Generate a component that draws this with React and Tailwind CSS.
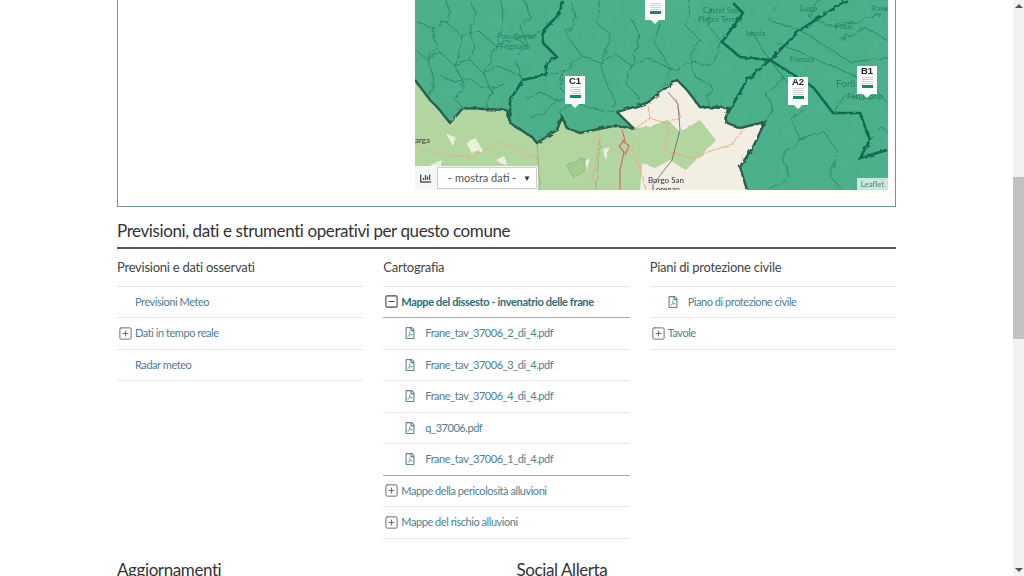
import { SquarePlus, SquareMinus } from 'lucide-react';
import { FaRegFilePdf, FaChartBar } from 'react-icons/fa';

const font = { fontFamily: 'Lato, sans-serif' };

// thin municipal borders, page coordinates
const thinLines = [
  'M415 20 L432 28 L446 22 L462 36 L478 30 L496 46 L515 38 L540 33',
  'M415 50 L428 60 L440 52 L455 66 L470 60 L484 74 L500 66 L520 76 L523 80',
  'M432 28 L436 48 L428 60 L434 80 L430 100',
  'M462 36 L458 58 L455 66 L464 84 L456 100 L463 108',
  'M496 46 L490 62 L484 74 L492 92 L486 110',
  'M446 0 L450 12 L446 22',
  'M500 0 L505 18 L496 46',
  'M520 76 L516 60 L528 46 L515 38',
  'M440 75 L455 82 L470 78 L484 90 L505 84',
  'M470 0 L476 14 L470 30 L474 48 L470 60',
  'M524 0 L530 16 L520 26 L528 46',
  'M545 75 L565 70 L582 56 L600 62 L615 54 L632 66 L650 58 L672 70 L690 60 L712 66 L722 42',
  'M565 70 L560 88 L572 100 L560 114 L562 117',
  'M600 62 L606 82 L614 98 L612 112 L617 112',
  'M632 66 L626 84 L638 96 L636 112',
  'M672 70 L664 84 L663 90',
  'M690 60 L696 78 L712 86 L706 106',
  'M570 0 L576 18 L566 34 L582 56',
  'M600 0 L596 22 L612 36 L600 62',
  'M632 20 L640 36 L632 66',
  'M660 24 L654 42 L672 70',
  'M690 0 L686 26 L700 40 L690 60',
  'M712 8 L708 26 L722 42',
  'M525 100 L540 92 L556 100 L572 100 L590 108 L612 112',
  'M530 118 L545 112 L556 100',
  'M770 60 L784 78 L766 92 L772 110 L765 122',
  'M784 78 L806 104 L792 120 L800 140 L782 156 L790 178 L770 190',
  'M800 140 L824 132 L838 152 L830 176 L842 190',
  'M750 30 L770 60 M780 0 L768 20 L800 30',
  'M776 42 L860 78 M800 30 L850 62 L888 58',
  'M820 0 L808 16 L830 26 L860 22 L888 10',
  'M833 113 L846 94 L862 100 L878 92 L888 104',
  'M870 140 L882 128 L888 132',
  'M840 40 L866 28 L888 40',
];

const roads = [
  'M415 146 L430 152 L470 158 L498 142 L528 154 L540 160',
  'M633 130 L650 118 L648 106 M650 118 L668 124 L680 116 L676 98',
  'M636 135 L632 150 L640 168 L646 190',
  'M668 124 L664 150 L690 158 L714 150 L732 144 L752 118',
  'M600 130 L596 160 L590 190',
];

const alertEdge =
  'M415 80 L430 100 L438 108 L450 123 L463 108 L507 110 L510 123 L532 137 L537 143 L557 130 L562 117 L567 128 L580 133 L613 126 L633 128 L617 112 L647 103 L663 90 L677 80 L687 90 L700 107 L728 108 L725 122 L740 128 L765 122 L753 147 L740 167 L747 190';

function MapDrawing() {
  return (
    <svg viewBox="415 0 473 190" className="block w-full h-full">
      <defs>
        <filter id="terrain" x="0" y="0" width="100%" height="100%">
          <feTurbulence type="fractalNoise" baseFrequency="0.06" numOctaves="3" seed="4" />
          <feColorMatrix values="0 0 0 0 0.1  0 0 0 0 0.5  0 0 0 0 0.35  0 0 0 1.1 -0.45" />
        </filter>
        <filter id="wiggle" x="-5%" y="-5%" width="110%" height="110%">
          <feTurbulence type="fractalNoise" baseFrequency="0.12" numOctaves="2" seed="7" />
          <feDisplacementMap in="SourceGraphic" scale="7" />
        </filter>
        <filter id="wiggleSmall" x="-5%" y="-5%" width="110%" height="110%">
          <feTurbulence type="fractalNoise" baseFrequency="0.2" numOctaves="2" seed="11" />
          <feDisplacementMap in="SourceGraphic" scale="3.5" />
        </filter>
        <clipPath id="alert">
          <path d={`${alertEdge} L888 190 L888 0 L415 0 Z`} />
        </clipPath>
      </defs>

      {/* base tiles */}
      <rect x="415" y="0" width="473" height="190" fill="#b3d5a0" />
      <path d="M617 112 L677 80 L700 107 L728 108 L740 128 L765 122 L745 170 L748 190 L640 190 L642 165 L636 128 Z" fill="#f3eee4" />
      <g filter="url(#wiggleSmall)">
        <path d="M636 128 L652 126 L668 120 L680 132 L700 120 L716 140 L702 154 L686 170 L670 160 L655 168 L640 162 Z" fill="#b3d5a0" />
        <path d="M466 142 L476 138 L482 150 L472 154 Z M580 165 L590 158 L586 172 Z M447 134 L456 138 L452 146 Z M495 160 L505 156 L508 166 Z M430 165 L442 160 L440 170 Z M602 150 L610 146 L606 160 Z" fill="#e9f0dc" />
        <path d="M566 165 L584 158 L586 170 L574 178 Z" fill="#a4cc8d" stroke="#7fae72" strokeWidth="0.6" />
        {roads.map((d) => (
          <path key={d} d={d} fill="none" stroke="#e8b27c" strokeWidth="1" />
        ))}
        <path d="M537 143 L540 190 M600 140 L596 190" fill="none" stroke="#8f9480" strokeWidth="0.6" />
      </g>
      <path d="M622 130 L625 140 L619 146 L624 152 L620 170 L620 190 M622 140 L629 146 L625 155" fill="none" stroke="#d4687a" strokeWidth="1.2" />
      <path d="M668 92 L678 104 L680 130 L672 160 L652 186" fill="none" stroke="#555" strokeWidth="0.7" />

      {/* alert zones */}
      <g clipPath="url(#alert)">
        <rect x="415" y="0" width="473" height="190" fill="#4bb08a" />
        <rect x="415" y="0" width="473" height="190" filter="url(#terrain)" opacity="0.4" />
        <g filter="url(#wiggle)">
          {thinLines.map((d) => (
            <path key={d} d={d} fill="none" stroke="#1f7358" strokeWidth="0.8" opacity="0.8" />
          ))}
        </g>
      </g>
      <g filter="url(#wiggleSmall)" fill="none">
        <path d={alertEdge} stroke="#2c5f4c" strokeWidth="2.4" />
        <path d="M562 0 L560 13 L542 32 L543 43 L557 57 L547 63 L545 75 L523 80 L510 100 L510 123" stroke="#126b50" strokeWidth="2.6" />
        <path d="M733 3 L743 13 L722 42 L740 57 L770 60 L747 80 L728 113" stroke="#126b50" strokeWidth="2.6" />
        <path d="M770 60 L800 30 L847 0 M770 60 L813 87 L833 113 L860 113 L870 140 L860 158 L887 150" stroke="#126b50" strokeWidth="2.6" />
      </g>

      {/* place names */}
      <g fontFamily="Lato, sans-serif" fontSize="8" fill="#1f7a5c" opacity="0.85">
        <text x="497" y="39">Pavullo nel</text>
        <text x="500" y="49">Frignano</text>
        <text x="703" y="13">Castel San</text>
        <text x="698" y="22">Pietro Terme</text>
        <text x="746" y="36">Imola</text>
        <text x="800" y="11">Lugo</text>
        <text x="835" y="29">Fussi</text>
        <text x="871" y="11">Rave</text>
        <text x="790" y="62">Faenza</text>
        <text x="836" y="87" fontSize="10">Forlì</text>
        <text x="847" y="99">Forlimpop</text>
      </g>
      <g fontFamily="Lato, sans-serif" fontSize="8" fill="#333">
        <text x="415" y="143">arga</text>
        <text x="648" y="183">Borgo San</text>
        <text x="652" y="192">Lorenzo</text>
      </g>
    </svg>
  );
}

function Marker({ label, left, top }) {
  return (
    <div className="absolute w-[20px] flex flex-col items-center" style={{ left, top }}>
      <div className="w-full h-[28px] bg-white flex flex-col items-center">
        <span className="text-[9.5px] leading-[10px] font-bold text-[#222] h-[10px]" style={{ fontFamily: '"Liberation Sans", sans-serif' }}>
          {label}
        </span>
        <div className="mt-[1px] w-[11px] flex flex-col gap-[1px]">
          <div className="h-[1px] bg-[#cfcfcf]" />
          <div className="h-[1px] bg-[#cfcfcf]" />
          <div className="h-[1px] bg-[#cfcfcf]" />
          <div className="h-[1px] bg-[#cfcfcf]" />
          <div className="h-[3px] bg-[#12896a]" />
        </div>
      </div>
      <div className="w-0 h-0 border-x-[4px] border-x-transparent border-t-[4px] border-t-white" />
    </div>
  );
}

function MapPanel() {
  return (
    <div className="h-[207px] border-x border-b border-[#6a96a3] flex justify-end pr-[7px]">
      <div className="relative w-[473px] h-[190px] overflow-hidden">
        <MapDrawing />
        <Marker label="" left={230} top={-8} />
        <Marker label="C1" left={150} top={76} />
        <Marker label="A2" left={373} top={77} />
        <Marker label="B1" left={442} top={66} />
        <div className="absolute left-0 bottom-0 w-[123px] h-[24px] bg-[#f6f6f6] flex items-center pl-[5px]">
          <FaChartBar className="shrink-0 w-[11px] h-[11px] text-[#555]" />
          <div className="ml-[6px] w-[100px] h-[22px] bg-white border border-[#ccc] flex items-center justify-between pl-[10px] pr-[5px] text-[11px] whitespace-nowrap text-[#555]" style={font}>
            <span>- mostra dati -</span>
            <span className="text-[8px] text-[#333]">▼</span>
          </div>
        </div>
        <div className="absolute right-0 bottom-0 w-[31px] h-[12px] bg-white/70 text-center text-[8px] leading-[13px] text-[#5b7f88]" style={font}>
          Leaflet
        </div>
      </div>
    </div>
  );
}

function Row({ icon, indent, bold, strong, children }) {
  return (
    <div className={`h-[31.5px] border-b flex items-center ${strong ? 'border-[#aaaaaa]' : 'border-[#e6e6e6]'}`}>
      {icon === 'plus' && <SquarePlus className="shrink-0 ml-[1px] w-[15px] h-[15px] text-[#666]" strokeWidth={1.5} />}
      {icon === 'minus' && <SquareMinus className="shrink-0 ml-[1px] w-[15px] h-[15px] text-[#444]" strokeWidth={1.7} />}
      {icon === 'pdf' && <FaRegFilePdf className={`${indent} shrink-0 w-[10px] h-[12px] text-[#5f8791]`} />}
      {!icon && <span className="w-[15px]" />}
      <span
        className={`text-[11px] whitespace-nowrap ${bold ? 'font-bold tracking-[-0.35px] text-[#2f6b7c]' : 'tracking-[-0.45px] text-[#4f7f8e]'} ${icon === 'pdf' ? 'ml-[10px]' : icon ? 'ml-[2px]' : 'ml-[3px]'}`}
      >
        {children}
      </span>
    </div>
  );
}

function Column({ title, children }) {
  return (
    <div>
      <h3 className="h-[37.5px] pt-[7px] text-[13px] tracking-[-0.25px] leading-[22px] text-[#444] border-b border-[#e6e6e6]">{title}</h3>
      {children}
    </div>
  );
}

export default function App() {
  return (
    <div className="h-[576px] w-[1024px] overflow-hidden flex bg-white" style={font}>
      <main className="w-[1013px] h-[576px] overflow-hidden pl-[117px] pr-[117px]">
        <MapPanel />

        <h2 className="mt-[12px] h-[28px] text-[17px] tracking-[-0.4px] leading-[24px] text-[#333] border-b-2 border-[#555] box-content">
          Previsioni, dati e strumenti operativi per questo comune
        </h2>

        <div className="grid grid-cols-3 gap-x-[20px]">
          <Column title="Previsioni e dati osservati">
            <Row>Previsioni Meteo</Row>
            <Row icon="plus">Dati in tempo reale</Row>
            <Row>Radar meteo</Row>
          </Column>
          <Column title="Cartografia">
            <Row icon="minus" bold strong>Mappe del dissesto - invenatrio delle frane</Row>
            <Row icon="pdf" indent="ml-[22px]">Frane_tav_37006_2_di_4.pdf</Row>
            <Row icon="pdf" indent="ml-[22px]">Frane_tav_37006_3_di_4.pdf</Row>
            <Row icon="pdf" indent="ml-[22px]">Frane_tav_37006_4_di_4.pdf</Row>
            <Row icon="pdf" indent="ml-[22px]">q_37006.pdf</Row>
            <Row icon="pdf" indent="ml-[22px]" strong>Frane_tav_37006_1_di_4.pdf</Row>
            <Row icon="plus">Mappe della pericolosità alluvioni</Row>
            <Row icon="plus">Mappe del rischio alluvioni</Row>
          </Column>
          <Column title="Piani di protezione civile">
            <Row icon="pdf" indent="ml-[18px]">Piano di protezione civile</Row>
            <Row icon="plus">Tavole</Row>
          </Column>
        </div>

        <div className="grid grid-cols-2 gap-x-[20px] mt-[19.5px] text-[17px] tracking-[-0.4px] leading-[24px] text-[#333]">
          <h2>Aggiornamenti</h2>
          <h2>Social Allerta</h2>
        </div>
      </main>

      {/* browser scrollbar */}
      <div className="w-[11px] h-[576px] bg-[#f1f1f1] flex flex-col items-center">
        <div className="mt-[4px] w-0 h-0 border-x-[4px] border-x-transparent border-b-[4px] border-b-[#555]" />
        <div className="mt-[169px] w-full h-[162px] bg-[#c1c1c1]" />
        <div className="mt-auto mb-[4px] w-0 h-0 border-x-[4px] border-x-transparent border-t-[4px] border-t-[#555]" />
      </div>
    </div>
  );
}
